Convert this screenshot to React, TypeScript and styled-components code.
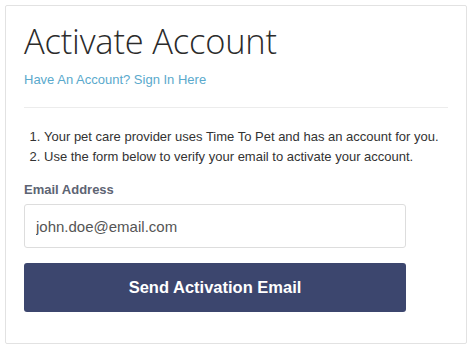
import React from 'react';
import styled, { createGlobalStyle } from 'styled-components';

const GlobalStyle = createGlobalStyle`
  html, body {
    margin: 0;
    padding: 0;
    background: #fff;
  }
  body {
    font-family: 'Liberation Sans', Arial, sans-serif;
    color: #333;
  }
`;

const Page = styled.div`
  padding: 5px;
`;

const Card = styled.div`
  width: 462px;
  height: 339px;
  box-sizing: border-box;
  border: 1px solid #e2e2e2;
  border-radius: 2px;
  padding: 13px 18px 0 18px;
  background: #fff;
`;

const Title = styled.h1`
  font-family: 'Open Sans', sans-serif;
  font-weight: 300;
  font-size: 34.5px;
  line-height: 44px;
  color: #2b2b2b;
  margin: 0;
  letter-spacing: -0.2px;
`;

const SignInLink = styled.a`
  display: block;
  margin-top: 8px;
  font-size: 13px;
  line-height: 18px;
  color: #5aa9cc;
  text-decoration: none;
`;

const Divider = styled.hr`
  border: 0;
  border-top: 1px solid #ececec;
  margin: 18px 0 0 0;
`;

const Steps = styled.ol`
  margin: 19px 0 0 0;
  padding-left: 20px;
  font-size: 13px;
  line-height: 20px;
  color: #333;
`;

const Form = styled.form`
  width: 382px;
  margin-top: 14px;
  display: flex;
  flex-direction: column;
`;

const Label = styled.label`
  font-size: 13px;
  font-weight: bold;
  color: #5d6473;
  line-height: 18px;
`;

const Input = styled.input`
  margin-top: 5px;
  height: 44px;
  box-sizing: border-box;
  border: 1px solid #ddd;
  border-radius: 3px;
  padding: 0 11px;
  font-family: 'Liberation Sans', Arial, sans-serif;
  font-size: 15px;
  color: #555;
  outline: none;
`;

const SubmitButton = styled.button`
  margin-top: 15px;
  height: 49px;
  border: 0;
  border-radius: 3px;
  background: #3c466e;
  color: #fff;
  font-family: 'Liberation Sans', Arial, sans-serif;
  font-size: 16.5px;
  font-weight: bold;
  cursor: pointer;
`;

export default function App() {
  return (
    <>
      <GlobalStyle />
      <Page>
        <Card>
          <Title>Activate Account</Title>
          <SignInLink href="#">Have An Account? Sign In Here</SignInLink>
          <Divider />
          <Steps>
            <li>Your pet care provider uses Time To Pet and has an account for you.</li>
            <li>Use the form below to verify your email to activate your account.</li>
          </Steps>
          <Form onSubmit={(e) => e.preventDefault()}>
            <Label htmlFor="email">Email Address</Label>
            <Input id="email" type="email" defaultValue="john.doe@email.com" />
            <SubmitButton type="submit">Send Activation Email</SubmitButton>
          </Form>
        </Card>
      </Page>
    </>
  );
}
